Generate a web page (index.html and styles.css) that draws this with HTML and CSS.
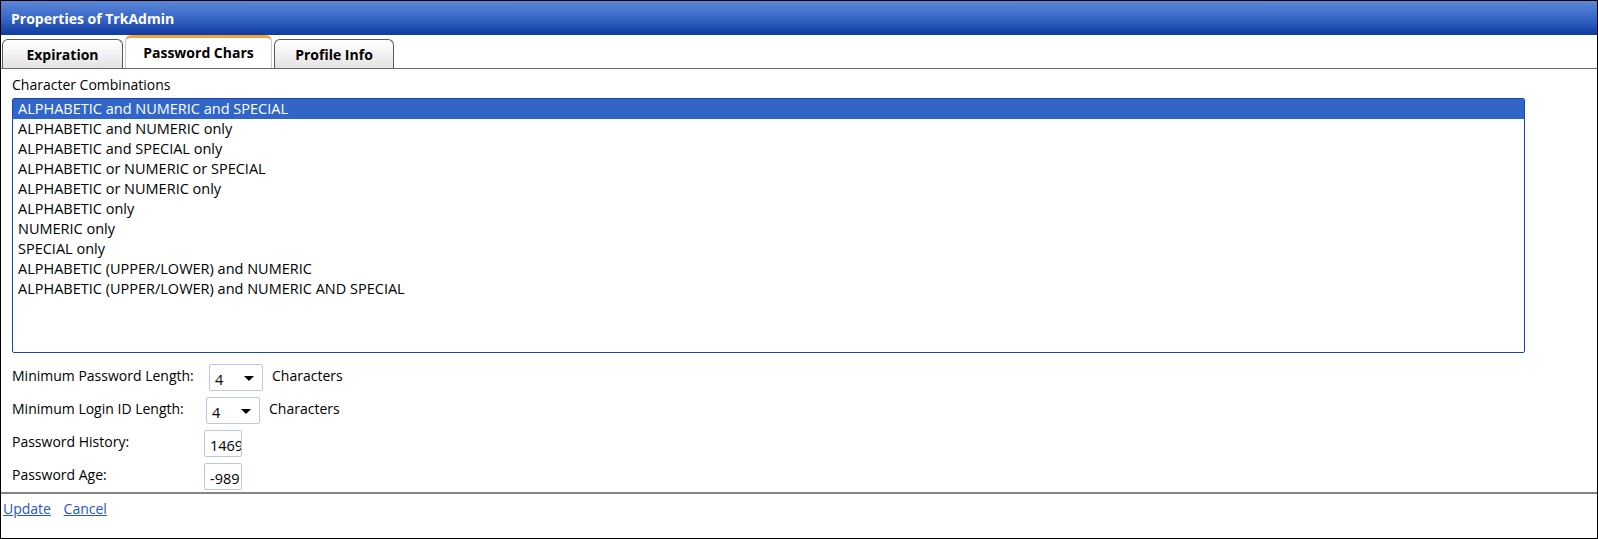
FILE: index.html
```html
<!DOCTYPE html>
<html>
<head>
<meta charset="utf-8"/>
    <title>Properties of TrkAdmin</title>
    <link rel="stylesheet" href="styles.css">
</head>
<body>
    <div class="dlg">
        <div class="title">Properties of TrkAdmin</div>
        <div class="tabs">
            <a class="tab" href="javascript:;">Expiration</a>
            <a class="tab current" href="javascript:;">Password Chars</a>
            <a class="tab" href="javascript:;">Profile Info</a>
        </div>
        <div class="body">
            <div class="cap">Character Combinations</div>
            <ul class="list">
                <li class="sel">ALPHABETIC and NUMERIC and SPECIAL</li>
                <li>ALPHABETIC and NUMERIC only</li>
                <li>ALPHABETIC and SPECIAL only</li>
                <li>ALPHABETIC or NUMERIC or SPECIAL</li>
                <li>ALPHABETIC or NUMERIC only</li>
                <li>ALPHABETIC only</li>
                <li>NUMERIC only</li>
                <li>SPECIAL only</li>
                <li>ALPHABETIC (UPPER/LOWER) and NUMERIC</li>
                <li>ALPHABETIC (UPPER/LOWER) and NUMERIC AND SPECIAL</li>
            </ul>
            <div class="row first">
                <span class="lbl">Minimum Password Length:</span>
                <span class="drop d1">4<i class="arr"></i></span>
                <span class="unit">Characters</span>
            </div>
            <div class="row">
                <span class="lbl">Minimum Login ID Length:</span>
                <span class="drop d2">4<i class="arr"></i></span>
                <span class="unit">Characters</span>
            </div>
            <div class="row">
                <span class="lbl">Password History:</span>
                <input class="num" type="text" value="1469"/>
            </div>
            <div class="row">
                <span class="lbl">Password Age:</span>
                <input class="num" type="text" value="-989"/>
            </div>
        </div>
        <div class="foot">
            <a href="javascript:;">Update</a>
            <a href="javascript:;">Cancel</a>
        </div>
    </div>
</body>
</html>
```

FILE: styles.css
```css
html, body { margin: 0; padding: 0; background: #fff;}
body { font-family: "Open Sans", "Noto Sans", sans-serif; font-size: 14px; color: #000;}
.dlg { width: 1598px;height: 539px;border: 1px solid #000;box-sizing: border-box;display: flex;flex-direction: column;}

.title {
    height: 34px;line-height: 36px;padding-left: 10px;color: #fff;font-weight: bold;font-size: 14px;
    background: linear-gradient(#5c88d8, #3563c4 55%, #0f3aa0);}

.tabs { height: 33px;display: flex;align-items: flex-end;gap: 2px;padding-left: 1px;border-bottom: 1px solid #6a6a6a;}
.tab {
    display: block;height: 29px;line-height: 29px;box-sizing: border-box;text-align: center;
    font-weight: bold;color: #000;text-decoration: none;font-size: 14px;
    border: 1px solid #4b5a78;border-bottom: none;border-radius: 6px 6px 0 0;
    background: linear-gradient(#ffffff, #f2f2f2 50%, #e2e2e2);}
.tab:nth-child(1) { width: 121px;}
.tab:nth-child(2) { width: 147px;}
.tab:nth-child(3) { width: 120px;}
.tab.current { height: 33px;line-height: 30px;background: #fff;border: 1px solid #c8c8c8;border-top: 3px solid #f3a53a;border-bottom: none;}

.body { flex: 1;padding: 0 0 0 11px;}
.cap { height: 29px;line-height: 31px;}
.list {
    margin: 0;padding: 0;list-style: none;width: 1513px;height: 255px;box-sizing: border-box;
    border: 1px solid #1c45b4;border-radius: 2px;overflow: hidden;font-size: 14.5px;}
.list li { height: 20px;line-height: 20px;padding-left: 5px;white-space: nowrap;}
.list li.sel { background: #3166c8;color: #fff;}

.row { display: flex;align-items: center;height: 33px;}
.row.first { margin-top: 6px;}
.lbl { width: 192px;}
.drop {
    position: relative;display: block;width: 54px;height: 27px;line-height: 29px;box-sizing: border-box;
    border: 1px solid #b7c9e6;border-radius: 2px;padding-left: 5px;font-size: 14.5px;margin-top: 4px;}
.d1 { margin-left: 5px;}
.d2 { margin-left: 2px;}
.arr {
    position: absolute;right: 8px;top: 11px;width: 0;height: 0;
    border-left: 5px solid transparent;border-right: 5px solid transparent;border-top: 5px solid #000;}
.unit { margin-left: 9px;}
.num {
    width: 38px;height: 27px;box-sizing: border-box;margin: 4px 0 0;padding: 3px 0 0 5px;
    border: 1px solid #b7c9e6;border-radius: 2px;font-family: "Open Sans", sans-serif;font-size: 14.5px;color: #000;outline: none;}

.foot { height: 46px;border-top: 2px solid #858585;padding: 5px 0 0 2px;box-sizing: border-box;}
.foot a { color: #2356d0;text-decoration: underline;margin-right: 9px;font-size: 14px;}
```
